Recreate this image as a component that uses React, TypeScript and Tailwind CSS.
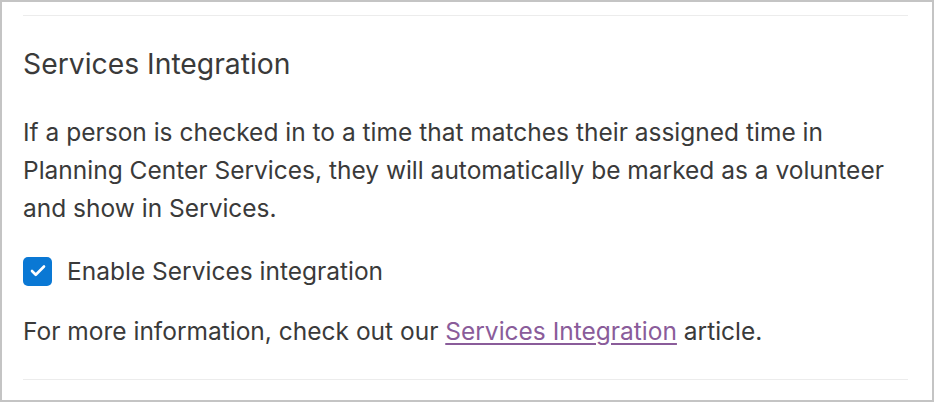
import { Check } from "lucide-react";

export default function App() {
    return (
        <div
            className="w-[934px] h-[402px] bg-white border-2 border-[#c4c4c4] text-[#3a3a3a]"
            style={{ fontFamily: "Inter, 'Noto Sans', sans-serif" }}
        >
            <div className="pl-[21px] pr-[24px] pt-[13px]">
                <div className="h-[1px] bg-[#ececec]" />

                {/* Section */}
                <h2 className="mt-[31px] text-[28.3px] leading-[34px] font-normal text-[#3a3a3a]">
                    Services Integration
                </h2>

                <p className="mt-[32px] text-[24.5px] leading-[38px]">
                    If a person is checked in to a time that matches their assigned time in
                    <br />
                    Planning Center Services, they will automatically be marked as a volunteer
                    <br />
                    and show in Services.
                </p>

                <label className="mt-[25px] flex items-center gap-[15px] text-[24.5px] leading-[38px]">
                    <span className="w-[29px] h-[29px] rounded-[5px] bg-[#0a78d4] flex items-center justify-center">
                        <Check size={18} strokeWidth={3.5} color="white" />
                    </span>
                    Enable Services integration
                </label>

                <p className="mt-[22px] text-[24.5px] leading-[38px]">
                    For more information, check out our{" "}
                    <a href="#" className="text-[#8a5c9a] underline underline-offset-[3px]">
                        Services Integration
                    </a>{" "}
                    article.
                </p>

                <div className="mt-[29px] h-[1px] bg-[#ececec]" />
            </div>
        </div>
    );
}
